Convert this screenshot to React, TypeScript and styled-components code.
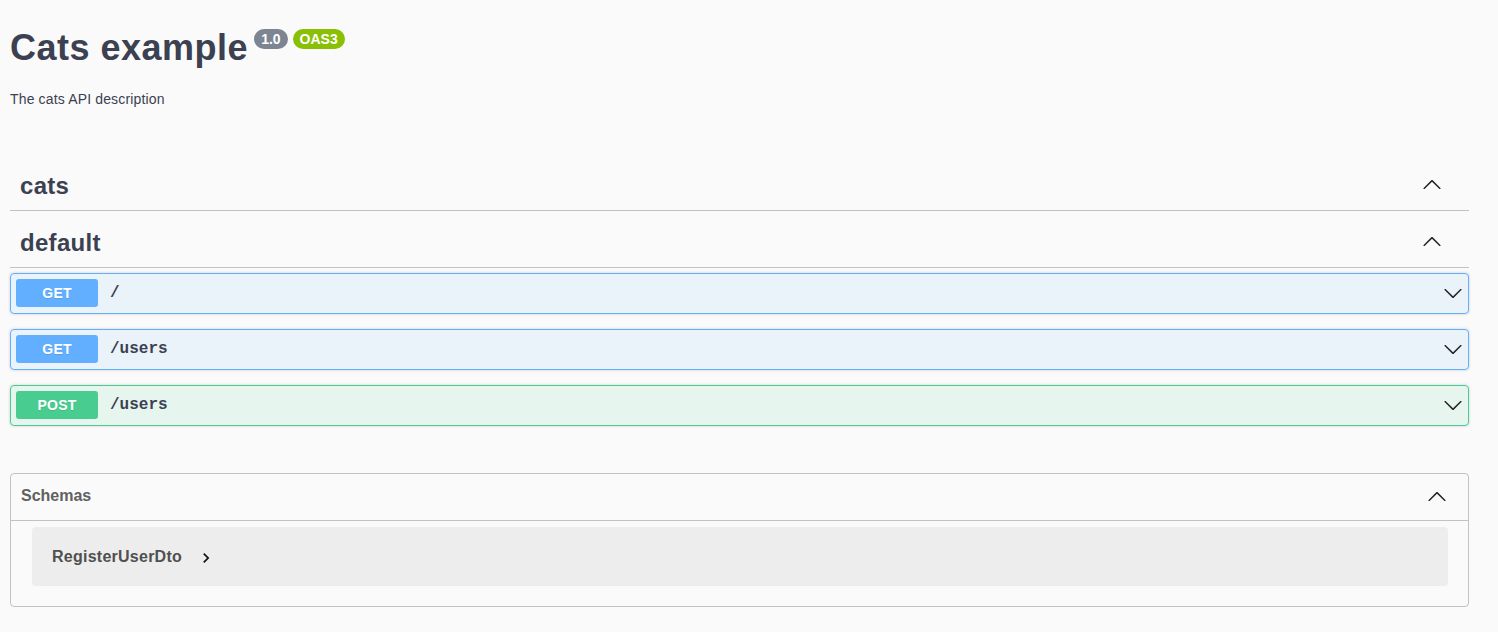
import React from "react";
import styled, { createGlobalStyle } from "styled-components";

const Global = createGlobalStyle`
  html, body { margin: 0; padding: 0; background: #fafafa; }
  body { font-family: "Liberation Sans", Arial, sans-serif; color: #3b4151; }
  * { box-sizing: border-box; }
`;

const Page = styled.div`
  padding: 0 29px 0 10px;
`;

const Info = styled.div`
  padding-top: 26px;
  margin-bottom: 51px;
`;

const Title = styled.h2`
  display: flex;
  align-items: flex-start;
  margin: 0;
  font-size: 36px;
  line-height: 43px;
  font-weight: 700;
  letter-spacing: 0.5px;
  color: #3b4151;
`;

const Badge = styled.span<{ $bg: string; $ml: number }>`
  display: inline-flex;
  align-items: center;
  height: 20px;
  margin-top: 3px;
  margin-left: ${(p) => p.$ml}px;
  padding: 0 7px;
  border-radius: 57px;
  background: ${(p) => p.$bg};
  color: #fff;
  font-size: 14px;
  line-height: 20px;
  font-weight: 700;
  letter-spacing: 0;
`;

const Description = styled.p`
  margin: 22px 0 0;
  font-size: 14px;
  line-height: 17px;
  letter-spacing: 0.15px;
  color: #3b4151;
`;

const Tag = styled.div`
  display: flex;
  align-items: center;
  justify-content: space-between;
  padding: 13px 27px 11px 10px;
  margin-bottom: 5px;
  border-bottom: 1px solid rgba(59, 65, 81, 0.3);
`;

const TagName = styled.h3`
  margin: 0;
  font-size: 24px;
  line-height: 27px;
  font-weight: 700;
  letter-spacing: 0.3px;
  color: #3b4151;
`;

const TagArrow = styled.span`
  display: flex;
  margin-bottom: 4px;
`;

const Opblock = styled.div<{ $color: string; $bg: string }>`
  display: flex;
  align-items: center;
  height: 41px;
  margin-bottom: 15px;
  padding: 5px 5px 6px;
  border: 1px solid ${(p) => p.$color};
  background: ${(p) => p.$bg};
  border-radius: 4px;
  box-shadow: 0 0 3px rgba(0, 0, 0, 0.19);
`;

const Method = styled.span<{ $color: string }>`
  display: flex;
  align-items: center;
  justify-content: center;
  width: 82px;
  height: 28px;
  flex-shrink: 0;
  border-radius: 3px;
  background: ${(p) => p.$color};
  color: #fff;
  font-size: 14px;
  font-weight: 700;
  letter-spacing: 0.2px;
  text-shadow: 0 1px 0 rgba(0, 0, 0, 0.1);
`;

const Path = styled.span`
  flex: 1;
  padding-left: 12px;
  font-family: "Liberation Mono", "Courier New", monospace;
  font-weight: 700;
  font-size: 16px;
  color: #3b4151;
`;

const Models = styled.section`
  margin-top: 47px;
  border: 1px solid rgba(59, 65, 81, 0.3);
  border-radius: 4px;
  padding-bottom: 20px;
  margin-bottom: 25px;
`;

const ModelsHeader = styled.h4`
  display: flex;
  align-items: center;
  justify-content: space-between;
  height: 47px;
  margin: 0;
  padding: 0 21px 3px 10px;
  border-bottom: 1px solid rgba(59, 65, 81, 0.3);
  font-size: 16px;
  font-weight: 700;
  color: #606060;
`;

const ModelBox = styled.div`
  display: flex;
  align-items: center;
  height: 59px;
  margin: 6px 20px 0 21px;
  padding: 0 20px;
  background: rgba(0, 0, 0, 0.05);
  border-radius: 4px;
`;

const ModelTitle = styled.span`
  font-size: 16px;
  font-weight: 700;
  letter-spacing: 0.25px;
  color: #505050;
`;

const Toggle = styled.svg`
  margin-left: 14px;
  margin-top: 2px;
`;

const ArrowUp = () => (
  <svg width="20" height="20" viewBox="0 0 20 20" fill="#222">
    <path d="M17.418 14.908c.272.268.709.268.979 0s.271-.701 0-.969l-7.908-7.83c-.27-.268-.707-.268-.979 0l-7.908 7.83c-.27.268-.27.701 0 .969.271.268.709.268.979 0L10 7.767l7.418 7.141z" />
  </svg>
);

const ArrowDown = () => (
  <svg width="20" height="20" viewBox="0 0 20 20" fill="#222">
    <path d="M17.418 6.109c.272-.268.709-.268.979 0s.271.701 0 .969l-7.908 7.83c-.27.268-.707.268-.979 0l-7.908-7.83c-.27-.268-.27-.701 0-.969.271-.268.709-.268.979 0L10 13.25l7.418-7.141z" />
  </svg>
);

const ops = [
  { method: "GET", path: "/", color: "#61affe", bg: "rgba(97,175,254,.1)" },
  { method: "GET", path: "/users", color: "#61affe", bg: "rgba(97,175,254,.1)" },
  { method: "POST", path: "/users", color: "#49cc90", bg: "rgba(73,204,144,.1)" },
];

export default function App() {
  return (
    <>
      <Global />
      <Page>
        <Info>
          <Title>
            <span>Cats example</span>
            <Badge $bg="#7d8492" $ml={6}>1.0</Badge>
            <Badge $bg="#89bf04" $ml={5}>OAS3</Badge>
          </Title>
          <Description>The cats API description</Description>
        </Info>

        <Tag>
          <TagName>cats</TagName>
          <TagArrow><ArrowUp /></TagArrow>
        </Tag>
        <Tag>
          <TagName>default</TagName>
          <TagArrow><ArrowUp /></TagArrow>
        </Tag>

        {ops.map((op, i) => (
          <Opblock key={i} $color={op.color} $bg={op.bg}>
            <Method $color={op.color}>{op.method}</Method>
            <Path>{op.path}</Path>
            <ArrowDown />
          </Opblock>
        ))}

        <Models>
          <ModelsHeader>
            <span>Schemas</span>
            <ArrowUp />
          </ModelsHeader>
          <ModelBox>
            <ModelTitle>RegisterUserDto</ModelTitle>
            <Toggle width="20" height="20" viewBox="0 0 24 24" fill="#111">
              <path d="M10 6L8.59 7.41 13.17 12l-4.58 4.59L10 18l6-6z" />
            </Toggle>
          </ModelBox>
        </Models>
      </Page>
    </>
  );
}
